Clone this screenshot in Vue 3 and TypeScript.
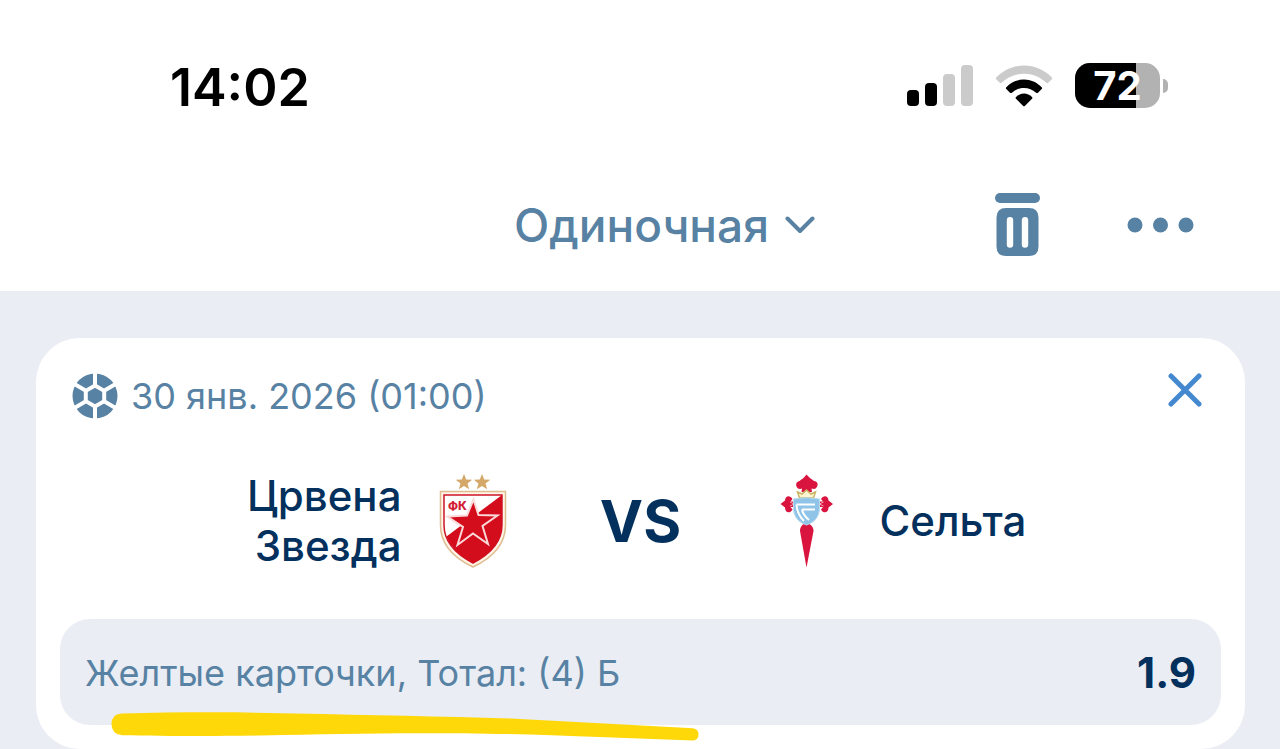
<script setup lang="ts">
import { ref } from 'vue'

interface Team {
  name: string
}

const time = '14:02'
const battery = 72
const betType = ref('Одиночная')
const home: Team = { name: 'Црвена Звезда' }
const away: Team = { name: 'Сельта' }
const kickoff = '30 янв. 2026 (01:00)'
const market = 'Желтые карточки, Тотал: (4) Б'
const odds = '1.9'
</script>

<template>
  <div class="screen">
    <div class="status">
      <time class="clock">{{ time }}</time>
      <div class="indicators">
        <svg class="signal" viewBox="0 0 66 42" aria-hidden="true">
          <rect x="0" y="25" width="12" height="16" rx="4" />
          <rect x="18" y="18" width="12" height="23" rx="4" />
          <rect x="36" y="9" width="12" height="32" rx="4" class="dim" />
          <rect x="54" y="0" width="12" height="41" rx="4" class="dim" />
        </svg>
        <svg class="wifi" viewBox="0 0 58 42" aria-hidden="true">
          <path class="dim" d="M1.2 12.4C9 4.8 18.6 .6 29 .6S49 4.8 56.800 12.400Q57.600 13.200 56.800 14.200L53.200 17.800Q52.300 18.600 51.400 17.800C45 12 37.400 8.800 29 8.800S13 12 6.600 17.800Q5.700 18.600 4.800 17.800L1.200 14.200Q.4 13.200 1.200 12.400Z" />
          <path d="M11.300 22.300C16.200 17.400 22.200 14.600 29 14.600S41.800 17.400 46.700 22.300Q47.500 23.200 46.700 24L43 27.700Q42.100 28.500 41.100 27.700C37.600 24.600 33.600 22.900 29 22.900S20.400 24.600 16.900 27.700Q15.900 28.500 15 27.700L11.300 24Q10.500 23.200 11.300 22.300Z" />
          <path d="M21 32.100C23.200 29.900 26 28.600 29 28.600S34.800 29.900 37 32.100Q37.800 33 37 33.800L29.800 41Q29 41.700 28.200 41L21 33.800Q20.200 33 21 32.100Z" />
        </svg>
        <div class="battery">
          <div class="cell">
            <div class="charge" :style="{ width: battery + '%' }"></div>
            <span class="level">{{ battery }}</span>
          </div>
          <div class="cap"></div>
        </div>
      </div>
    </div>

    <header class="toolbar">
      <button class="type" type="button">
        {{ betType }}
        <svg class="chevron" viewBox="0 0 30 18" aria-hidden="true">
          <path d="M2.500 2.500 15 15 27.500 2.500" />
        </svg>
      </button>
      <button class="icon-button" type="button" aria-label="Удалить">
        <svg class="trash" viewBox="0 0 46 64" aria-hidden="true">
          <rect x="0" y="0" width="45" height="10" rx="5" />
          <path fill-rule="evenodd" d="M11 15H34Q43.500 15 43.500 24.500V53.500Q43.500 63 34 63H11Q1.500 63 1.500 53.500V24.500Q1.500 15 11 15ZM15 24Q11.800 24 11.800 27.200V51.500Q11.800 54.700 15 54.700T18.200 51.500V27.200Q18.200 24 15 24ZM30 24Q26.800 24 26.800 27.200V51.500Q26.800 54.700 30 54.700T33.200 51.500V27.200Q33.200 24 30 24Z" />
        </svg>
      </button>
      <button class="icon-button" type="button" aria-label="Ещё">
        <svg class="dots" viewBox="0 0 68 16" aria-hidden="true">
          <circle cx="8" cy="8" r="7.500" />
          <circle cx="33.500" cy="8" r="7.500" />
          <circle cx="59" cy="8" r="7.500" />
        </svg>
      </button>
    </header>

    <main class="content">
      <article class="card">
        <div class="card-head">
          <svg class="ball" viewBox="0 0 46 46" aria-hidden="true">
            <circle cx="23" cy="23" r="22.500" class="blue" />
            <path class="seam" d="M23 0V12M23 34V46M13.500 17.500 1.500 10.500M32.500 17.500 44.500 10.500M13.500 28.500 1.500 35.500M32.500 28.500 44.500 35.500M23 12.500 32.200 17.800V28.200L23 33.500 13.800 28.200V17.800Z" />
          </svg>
          <time class="date">{{ kickoff }}</time>
          <button class="close" type="button" aria-label="Закрыть">
            <svg viewBox="0 0 34 34" aria-hidden="true"><path d="M3 3 31 31M31 3 3 31" /></svg>
          </button>
        </div>

        <div class="match">
          <div class="team home">{{ home.name }}</div>
          <svg class="crest" viewBox="0 0 96 96" role="img" aria-label="Црвена Звезда">
            <g fill="#d3a868">
              <path d="M38 1 40.200 6.500 46.200 6.700 41.500 10.500 43.200 16.200 38 12.900 32.800 16.200 34.500 10.500 29.800 6.700 35.800 6.500Z" />
              <path d="M56 1 58.200 6.500 64.200 6.700 59.500 10.500 61.200 16.200 56 12.900 50.800 16.200 52.500 10.500 47.800 6.700 53.800 6.500Z" />
            </g>
            <path d="M14.500 18.500H79.500V52C79.500 73 64 86 47 94 30 86 14.500 73 14.500 52Z" fill="#fff5e8" stroke="#dfbd91" stroke-width="1.500" />
            <path d="M18 22H76V52C76 71 61.500 82.500 47 90 32.500 82.500 18 71 18 52Z" fill="#fff" stroke="#cd1525" stroke-width="1.500" />
            <path d="M76 22V52C76 71 61.500 82.500 47 90 35 84 25 75 20.500 63.500Z" fill="#d40d1c" />
            <path d="M47.500 26.500 52.500 42 71.500 42.500 56.500 53 62 71 47 60.500 31.500 72 37 54 21.500 43.500 41 42.500Z" fill="#d40d1c" stroke="#fbd9d9" stroke-width="2" />
            <text x="22" y="37" class="crest-text">ФК</text>
          </svg>
          <div class="versus">VS</div>
          <svg class="crest" viewBox="0 0 96 96" role="img" aria-label="Сельта">
            <path d="M46.500 1.500C49 4.500 51.500 6 54 8 58 8.500 58.500 12 56.500 14.500 55 16.500 53 16 51.500 15.500L52 19H41.500L42 15.500C40 16.500 37.500 16 36.500 13.500 35.500 10.500 37 8.500 39.500 8 42 6 44.500 4.500 46.500 1.500Z" fill="#d9143f" />
            <path d="M20.500 31 25 27.500C25 22.500 30 21.500 32.500 26L30.500 28.500H37V34H30.500L32.500 36.500C30 41 25 40 25 34.500ZM73 31 68.500 27.500C68.500 22.500 63.500 21.500 61 26L63 28.500H56.500V34H63L61 36.500C63.500 41 68.500 40 68.500 34.500Z" fill="#d9143f" />
            <path d="M30 29 34 31 30 33M63.500 29 59.500 31 63.500 33" fill="none" stroke="#f7a6b4" />
            <path d="M39.500 25 37.500 19 42 21 46.500 17 51 21 55.500 19 53.500 25Z" fill="#fff5cf" stroke="#c8b465" stroke-width="1.500" />
            <path d="M46.500 50C42 51 40 54 40 58L46.500 94.500 53.500 58C53.500 54 51 51 46.500 50Z" fill="#d9143f" />
            <path d="M33.500 26Q46.500 23.500 59.500 26V35C59.500 44 54 49.500 46.500 52 39 49.500 33.500 44 33.500 35Z" fill="#8fc3e8" stroke="#bad9ed" />
            <path d="M36.500 31.500H55M36.500 31.500Q37 41 44 48M42 36.500H55M42 36.500Q43 42 49 47" fill="none" stroke="#fff" stroke-width="2" />
          </svg>
          <div class="team away">{{ away.name }}</div>
        </div>

        <div class="bet">
          <span class="market">{{ market }}</span>
          <strong class="odds">{{ odds }}</strong>
          <svg class="marker" viewBox="0 0 588 30" aria-hidden="true">
            <path d="M11 1.500C50 .2 90 0 125 .3L185 1.500C260 3 330 4.500 400 6.500L582 16.300Q587.500 17 587.500 22.500T582 28.400L420 22.500C310 20 240 21.500 150 23.500C100 24.500 50 24 11 23.300Q.5 22 .5 12T11 1.500Z" />
          </svg>
        </div>
      </article>
    </main>
  </div>
</template>

<style>
body {
  margin: 0;
  background: #eaedf3;
}
</style>

<style scoped>
.screen {
  font-family: Inter, 'Liberation Sans', sans-serif;
  color: #03305c;
}

button {
  padding: 0;
  border: 0;
  background: none;
  font: inherit;
  color: inherit;
  cursor: pointer;
}

svg {
  display: block;
  flex: none;
}

.status {
  display: flex;
  align-items: flex-start;
  justify-content: space-between;
  padding: 58px 112px 0 170px;
  background: #fff;
  color: #000;
}

.clock {
  font-size: 52px;
  line-height: 60px;
  font-weight: 600;
}

.indicators {
  display: flex;
  align-items: center;
  gap: 22px;
  padding-top: 5px;
}

.signal {
  width: 66px;
  height: 42px;
}

.wifi {
  width: 58px;
  height: 42px;
}

.dim {
  fill: #cbcbcb;
}

.battery {
  display: flex;
  align-items: center;
  gap: 3px;
}

.cell {
  position: relative;
  width: 85px;
  height: 45px;
  border-radius: 15px;
  background: #b2b2b2;
}

.charge {
  height: 100%;
  border-radius: 15px 0 0 15px;
  background: #000;
}

.level {
  position: absolute;
  inset: 0;
  text-align: center;
  font-size: 40px;
  line-height: 45px;
  font-weight: 700;
  color: #fff;
}

.cap {
  width: 5px;
  height: 14px;
  border-radius: 0 5px 5px 0;
  background: #b2b2b2;
}

.toolbar {
  display: flex;
  align-items: center;
  justify-content: flex-end;
  gap: 86px;
  padding: 75px 85px 34px 0;
  background: #fff;
  color: #5882a3;
}

.type {
  display: flex;
  align-items: center;
  gap: 16px;
  margin-right: 94px;
  font-size: 46px;
  line-height: 56px;
  font-weight: 500;
}

.chevron {
  width: 30px;
  height: 18px;
  fill: none;
  stroke: currentColor;
  stroke-width: 4;
  stroke-linecap: round;
  stroke-linejoin: round;
}

.trash {
  width: 46px;
  height: 64px;
  fill: currentColor;
}

.dots {
  width: 68px;
  height: 16px;
  fill: currentColor;
}

.content {
  padding: 47px 35px 0 36px;
  background: #eaedf3;
}

.card {
  padding: 35px 24px 24px;
  border-radius: 44px;
  background: #fff;
}

.card-head {
  display: flex;
  align-items: center;
  gap: 13px;
  padding: 0 19px 0 12px;
}

.ball {
  width: 46px;
  height: 46px;
}

.blue {
  fill: #5882a3;
}

.seam {
  fill: none;
  stroke: #fff;
  stroke-width: 4;
}

.date {
  font-size: 36px;
  line-height: 44px;
  color: #5882a3;
}

.close {
  margin: 0 0 12px auto;
}

.close svg {
  width: 34px;
  height: 34px;
  fill: none;
  stroke: #4489cf;
  stroke-width: 5;
  stroke-linecap: round;
}

.match {
  display: grid;
  grid-template-columns: 1fr 96px 238px 96px 1fr;
  align-items: center;
  padding: 52px 0 48px;
}

.team {
  font-size: 42px;
  line-height: 50px;
  font-weight: 500;
}

.home {
  justify-self: end;
  width: min-content;
  margin-right: 24px;
  text-align: right;
}

.away {
  margin-left: 24px;
}

.crest {
  width: 96px;
  height: 96px;
}

.crest-text {
  font-size: 12px;
  font-weight: 800;
  fill: #d31c35;
}

.versus {
  text-align: center;
  font-size: 58px;
  line-height: 64px;
  font-weight: 700;
}

.bet {
  position: relative;
  display: flex;
  align-items: center;
  justify-content: space-between;
  padding: 32px 25px 30px;
  border-radius: 30px;
  background: #eaedf3;
}

.market {
  font-size: 36px;
  line-height: 44px;
  color: #5882a3;
}

.odds {
  font-size: 42px;
  line-height: 44px;
  font-weight: 700;
}

.marker {
  position: absolute;
  left: 51px;
  bottom: -17px;
  width: 588px;
  height: 30px;
  fill: #ffd80a;
}
</style>
